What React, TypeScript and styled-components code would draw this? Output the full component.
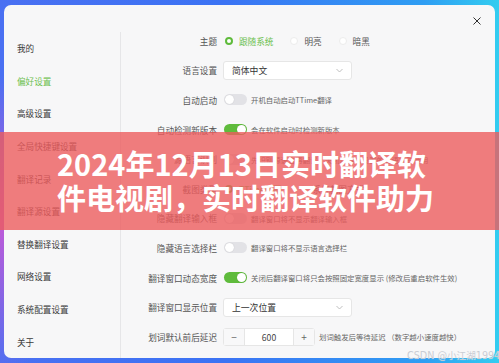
import React from "react";
import styled, { createGlobalStyle } from "styled-components";

const GREEN = "#5fbb3c";
const FONT = `"Noto Sans CJK SC", "Noto Sans", sans-serif`;

const Global = createGlobalStyle`
  html, body { margin: 0; padding: 0; }
  body {
    width: 499px;
    height: 363px;
    overflow: hidden;
    font-family: ${FONT};
    background:
      radial-gradient(ellipse 70px 150px at 0% 62%, #c05ad8 0%, rgba(192,90,216,0) 100%),
      linear-gradient(90deg, #4a70f2 0%, #3b73f4 45%, #2f9ef3 85%, #33cdf0 100%);
  }
  #root { width: 499px; height: 363px; position: relative; }
`;

const Stage = styled.div`
  position: relative;
  width: 499px;
  height: 363px;
  padding: 5px 4px;
  box-sizing: border-box;
`;

const Window = styled.div`
  position: relative;
  width: 491px;
  height: 353px;
  background: #f7f7f8;
  border-radius: 7px;
  display: flex;
  overflow: hidden;
`;

const Sidebar = styled.nav`
  width: 116px;
  margin-top: 27px;
  border-right: 1px solid #e6e6e8;
  display: flex;
  flex-direction: column;
`;

const NavItem = styled.div<{ $active?: boolean }>`
  height: 33.2px;
  display: flex;
  align-items: center;
  padding-left: 13px;
  font-size: 8.6px;
  color: ${(p) => (p.$active ? "#6cc04e" : "#3a3a3a")};
`;

const Main = styled.div`
  flex: 1;
  padding-top: 21px;
  display: flex;
  flex-direction: column;
`;

const Row = styled.div`
  height: 29.6px;
  display: flex;
  align-items: center;
`;

const Label = styled.div`
  width: 102px;
  padding-right: 6px;
  box-sizing: border-box;
  text-align: right;
  font-size: 8.6px;
  color: #555;
  white-space: nowrap;
`;

const RadioGroup = styled.div`
  display: flex;
  align-items: center;
`;

const RadioOption = styled.div<{ $checked?: boolean }>`
  display: flex;
  align-items: center;
  margin-right: 15px;
  font-size: 8.6px;
  color: ${(p) => (p.$checked ? "#6cc04e" : "#555")};
`;

const RadioDot = styled.span<{ $checked?: boolean }>`
  width: 8px;
  height: 8px;
  box-sizing: border-box;
  border-radius: 50%;
  background: #fff;
  border: ${(p) => (p.$checked ? `2.4px solid ${GREEN}` : "1px solid #ececec")};
  margin-right: 6px;
  margin-left: 2px;
`;

const Select = styled.div`
  width: 129px;
  height: 19px;
  box-sizing: border-box;
  background: #fff;
  border: 1px solid #e6e6e6;
  border-radius: 3px;
  display: flex;
  align-items: center;
  justify-content: space-between;
  padding: 0 8px;
  font-size: 8.8px;
  color: #333;
`;

const Chevron = styled.svg`
  width: 7px;
  height: 5px;
`;

const Switch = styled.span<{ $on?: boolean }>`
  width: 23px;
  height: 11px;
  border-radius: 6px;
  background: ${(p) => (p.$on ? GREEN : "#e2e2e6")};
  display: flex;
  align-items: center;
  justify-content: ${(p) => (p.$on ? "flex-end" : "flex-start")};
  padding: 0 1px;
  box-sizing: border-box;
  margin-left: 1px;
  margin-right: 4px;
`;

const Knob = styled.span`
  width: 9px;
  height: 9px;
  border-radius: 50%;
  background: #fff;
  box-shadow: 0 0 1px rgba(0, 0, 0, 0.2);
`;

const Desc = styled.span`
  font-size: 7.4px;
  color: #666;
  white-space: nowrap;
`;

const Stepper = styled.div`
  display: flex;
  height: 18px;
  border: 1px solid #e6e6e6;
  border-radius: 3px;
  background: #fff;
  box-sizing: border-box;
  margin-right: 4px;
`;

const StepBtn = styled.div<{ $side: "l" | "r" }>`
  width: 20px;
  display: flex;
  align-items: center;
  justify-content: center;
  background: #f8f8f9;
  color: #666;
  font-size: 10px;
  ${(p) => (p.$side === "l" ? "border-right: 1px solid #e6e6e6;" : "border-left: 1px solid #e6e6e6;")}
`;

const StepValue = styled.div`
  width: 48px;
  display: flex;
  align-items: center;
  justify-content: center;
  font-size: 8.6px;
  color: #444;
`;

const Close = styled.svg`
  position: absolute;
  top: 12px;
  right: 14px;
  width: 8px;
  height: 8px;
`;

const Banner = styled.div`
  position: absolute;
  left: 0;
  top: 132px;
  width: 499px;
  height: 98px;
  background: rgba(236, 92, 94, 0.8);
  box-sizing: border-box;
  padding: 14px 0 0 57px;
  color: #fff;
  font-family: ${FONT};
  font-weight: 700;
  font-size: 29px;
  line-height: 34px;
  white-space: nowrap;
`;

const BannerLine = styled.div``;

const Watermark = styled.div`
  position: absolute;
  left: 407px;
  top: 348px;
  font-family: "DejaVu Sans", "Noto Sans CJK SC", sans-serif;
  font-size: 9.6px;
  color: #c9ccd3;
  white-space: nowrap;
  text-shadow: 0 0 1px rgba(255, 255, 255, 0.6);
`;

const navItems = [
  "我的",
  "偏好设置",
  "高级设置",
  "全局快捷键设置",
  "翻译记录",
  "翻译源设置",
  "替换翻译设置",
  "网络设置",
  "系统配置设置",
  "关于",
];

const Toggle = ({ on, text }: { on?: boolean; text: string }) => (
  <>
    <Switch $on={on}>
      <Knob />
    </Switch>
    <Desc>{text}</Desc>
  </>
);

const SelectBox = ({ value }: { value: string }) => (
  <Select>
    <span>{value}</span>
    <Chevron viewBox="0 0 7 5">
      <path d="M0.5 1 L3.5 4 L6.5 1" fill="none" stroke="#b8b8b8" strokeWidth="0.9" />
    </Chevron>
  </Select>
);

export default function App() {
  return (
    <>
      <Global />
      <Stage>
        <Window>
          <Sidebar>
            {navItems.map((n) => (
              <NavItem key={n} $active={n === "偏好设置"}>
                {n}
              </NavItem>
            ))}
          </Sidebar>
          <Main>
            <Row>
              <Label>主题</Label>
              <RadioGroup>
                <RadioOption $checked>
                  <RadioDot $checked />
                  跟随系统
                </RadioOption>
                <RadioOption>
                  <RadioDot />
                  明亮
                </RadioOption>
                <RadioOption>
                  <RadioDot />
                  暗黑
                </RadioOption>
              </RadioGroup>
            </Row>
            <Row>
              <Label>语言设置</Label>
              <SelectBox value="简体中文" />
            </Row>
            <Row>
              <Label>自动启动</Label>
              <Toggle text="开机自动启动TTime翻译" />
            </Row>
            <Row>
              <Label>自动检测新版本</Label>
              <Toggle on text="会在软件启动时检测新版本" />
            </Row>
            <Row>
              <Label>源语言识别</Label>
              <Toggle text="先识别源语言再翻译，关闭后将以设置的源语言时使用" />
            </Row>
            <Row>
              <Label>截图类型</Label>
              <RadioGroup>
                <RadioOption $checked>
                  <RadioDot $checked />
                  TTime截图
                </RadioOption>
                <RadioOption>
                  <RadioDot />
                  系统截图方式
                </RadioOption>
              </RadioGroup>
            </Row>
            <Row>
              <Label>隐藏翻译输入框</Label>
              <Toggle text="翻译窗口将不显示翻译输入框" />
            </Row>
            <Row>
              <Label>隐藏语言选择栏</Label>
              <Toggle text="翻译窗口将不显示语言选择栏" />
            </Row>
            <Row>
              <Label>翻译窗口动态宽度</Label>
              <Toggle on text="关闭后翻译窗口将只会按照固定宽度显示 (修改后重启软件生效)" />
            </Row>
            <Row>
              <Label>翻译窗口显示位置</Label>
              <SelectBox value="上一次位置" />
            </Row>
            <Row>
              <Label>划词默认前后延迟</Label>
              <Stepper>
                <StepBtn $side="l">−</StepBtn>
                <StepValue>600</StepValue>
                <StepBtn $side="r">+</StepBtn>
              </Stepper>
              <Desc>划词触发后等待延迟 （数字越小速度越快）</Desc>
            </Row>
          </Main>
          <Close viewBox="0 0 8 8">
            <path d="M0.5 0.5 L7.5 7.5 M7.5 0.5 L0.5 7.5" stroke="#333" strokeWidth="1" />
          </Close>
        </Window>
        <Banner>
          <BannerLine>2024年12月13日实时翻译软</BannerLine>
          <BannerLine>件电视剧，实时翻译软件助力</BannerLine>
        </Banner>
        <Watermark>CSDN @小江湖1994</Watermark>
      </Stage>
    </>
  );
}
